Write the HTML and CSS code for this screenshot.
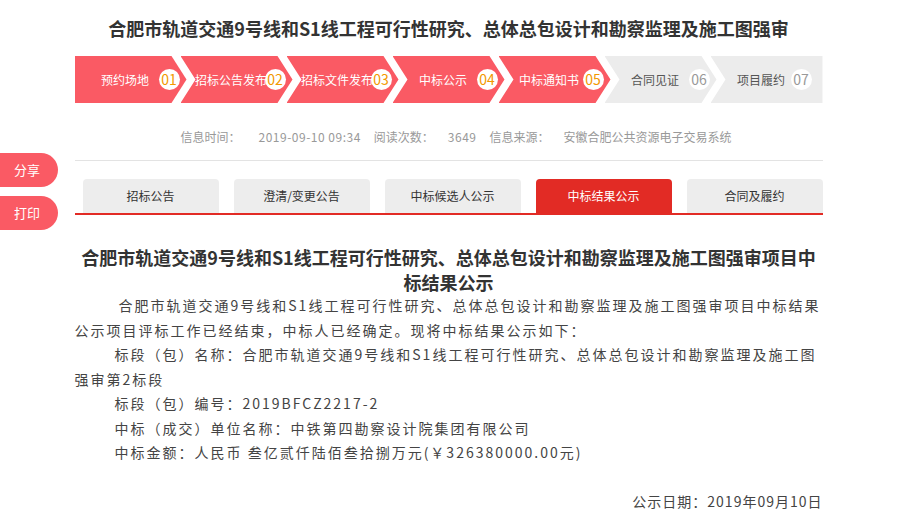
FILE: index.html
```html
<!DOCTYPE html>
<html lang="zh-CN">
<head>
<meta charset="utf-8">
<title>中标结果公示</title>
<link rel="stylesheet" href="styles.css">
</head>
<body>
<div class="side">
  <a class="side-btn">分享</a>
  <a class="side-btn">打印</a>
</div>
<div class="page">
  <h1 class="title">合肥市轨道交通9号线和S1线工程可行性研究、总体总包设计和勘察监理及施工图强审</h1>
  <ol class="steps">
    <li class="step on first"><span class="step-name">预约场地</span><span class="step-no">01</span></li>
    <li class="step on"><span class="step-name">招标公告发布</span><span class="step-no">02</span></li>
    <li class="step on"><span class="step-name">招标文件发布</span><span class="step-no">03</span></li>
    <li class="step on"><span class="step-name">中标公示</span><span class="step-no">04</span></li>
    <li class="step on"><span class="step-name">中标通知书</span><span class="step-no">05</span></li>
    <li class="step"><span class="step-name">合同见证</span><span class="step-no">06</span></li>
    <li class="step last"><span class="step-name">项目履约</span><span class="step-no">07</span></li>
  </ol>
  <div class="meta">
    <span class="m-label first-label">信息时间：</span><span class="m-val num">2019-09-10 09:34</span>
    <span class="m-label">阅读次数：</span><span class="m-val num">3649</span>
    <span class="m-label">信息来源：</span><span class="m-val">安徽合肥公共资源电子交易系统</span>
  </div>
  <ul class="tabs">
    <li class="tab">招标公告</li>
    <li class="tab">澄清/变更公告</li>
    <li class="tab">中标候选人公示</li>
    <li class="tab active">中标结果公示</li>
    <li class="tab">合同及履约</li>
  </ul>
  <h2 class="art-title">合肥市轨道交通9号线和S1线工程可行性研究、总体总包设计和勘察监理及施工图强审项目中标结果公示</h2>
  <div class="art">
    <p class="p-first">合肥市轨道交通9号线和S1线工程可行性研究、总体总包设计和勘察监理及施工图强审项目中标结果公示项目评标工作已经结束，中标人已经确定。现将中标结果公示如下：</p>
    <p>标段（包）名称：合肥市轨道交通9号线和S1线工程可行性研究、总体总包设计和勘察监理及施工图强审第2标段</p>
    <p>标段（包）编号：2019BFCZ2217-2</p>
    <p>中标（成交）单位名称：中铁第四勘察设计院集团有限公司</p>
    <p>中标金额：人民币 叁亿贰仟陆佰叁拾捌万元(￥326380000.00元)</p>
    <p class="blank">&nbsp;</p>
    <p class="sign">公示日期：2019年09月10日</p>
  </div>
</div>
</body>
</html>
```

FILE: styles.css
```css
* { box-sizing: border-box; }
html, body { margin: 0; padding: 0; background: #fff; }
body {
  font-family: "Noto Sans CJK SC", "Noto Sans", sans-serif;
  color: #333;
  position: relative;
}

.side {
  position: absolute;
  left: 0;
  top: 153px;
  display: flex;
  flex-direction: column;
  gap: 9px;
}
.side-btn {
  display: block;
  width: 58px;
  height: 34px;
  line-height: 34px;
  background: #fa5a64;
  color: #fff;
  font-size: 13px;
  text-align: center;
  border-radius: 0 17px 17px 0;
  padding-right: 4px;
}

.page {
  width: 748px;
  margin: 0 auto;
}

.title {
  margin: 0;
  padding-top: 14px;
  height: 56px;
  line-height: 28px;
  font-size: 18px;
  font-weight: 700;
  text-align: center;
  color: #333;
  white-space: nowrap;
}

.steps {
  list-style: none;
  margin: 0;
  padding: 0;
  display: flex;
  height: 47px;
  width: 748px;
}
.step {
  position: relative;
  flex: 0 0 112px;
  min-width: 0;
  width: 112px;
  height: 47px;
  margin-left: -6px;
  padding: 0 28px 0 17px;
  display: flex;
  align-items: center;
  justify-content: center;
  background: #ececec;
  color: #555;
  font-size: 12px;
  white-space: nowrap;
  clip-path: polygon(0 0, calc(100% - 15px) 0, 100% 50%, calc(100% - 15px) 100%, 0 100%, 15px 50%);
}
.step.first {
  margin-left: 0;
  clip-path: polygon(0 0, calc(100% - 15px) 0, 100% 50%, calc(100% - 15px) 100%, 0 100%);
}
.step.last {
  clip-path: polygon(0 0, 100% 0, 100% 100%, 0 100%, 15px 50%);
}
.step.on {
  background: #fa5a64;
  color: #fff;
}
.step-name { display: block; flex: none; }
.step-no {
  position: absolute;
  right: 7px;
  top: 13px;
  width: 21px;
  height: 21px;
  border-radius: 50%;
  background: #fff;
  color: #999;
  font-size: 14px;
  line-height: 21px;
  text-align: center;
}
.step.last .step-no { right: 11px; }
.step.on .step-no { color: #f39800; }

.meta {
  margin-top: 24px;
  padding: 0 0 13px 15px;
  border-bottom: 1px solid #e3e3e3;
  display: flex;
  justify-content: center;
  font-size: 12px;
  line-height: 20px;
  color: #999;
  white-space: nowrap;
}
.m-label { margin-right: 14px; }
.m-label.first-label { margin-right: 18px; }
.m-val { margin-right: 13px; }
.m-val.num { letter-spacing: 0.5px; }
.m-val:last-child { margin-right: 0; }

.tabs {
  list-style: none;
  margin: 18px 0 0;
  padding: 0 0 0 8px;
  display: flex;
  gap: 15px;
  border-bottom: 2px solid #e22b25;
}
.tab {
  flex: 1 1 0;
  height: 34px;
  line-height: 34px;
  text-align: center;
  font-size: 12px;
  color: #333;
  background: #ededed;
  border-radius: 4px 4px 0 0;
}
.tab.active {
  background: #e22b25;
  color: #fff;
}

.art-title {
  margin: 30px 0 0;
  font-size: 18px;
  font-weight: 700;
  line-height: 25px;
  text-align: center;
  color: #333;
}

.art {
  margin-top: -2px;
  margin-right: -4px;
  font-size: 14px;
  letter-spacing: 2px;
  line-height: 24.5px;
  color: #444;
}
.art p {
  margin: 0;
  text-indent: 40px;
}
.art .p-first { text-indent: 44px; }
.art .sign {
  text-align: right;
  margin-right: 4px;
  letter-spacing: 1px;
}
```
